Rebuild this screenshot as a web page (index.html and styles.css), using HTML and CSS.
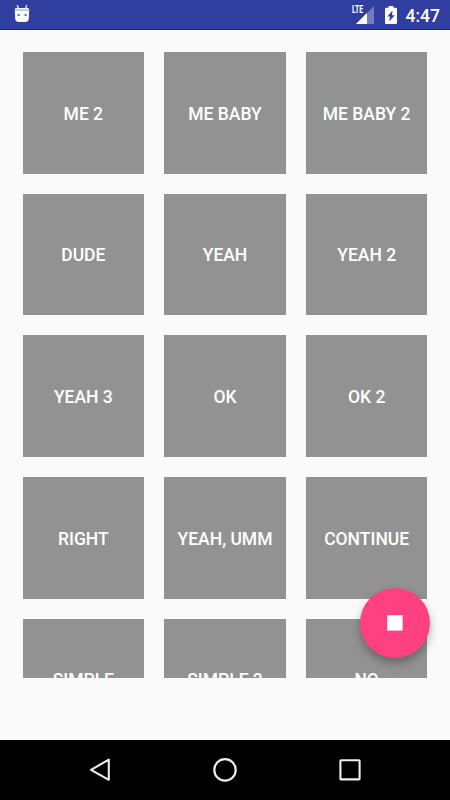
FILE: index.html
```html
<!DOCTYPE html>
<html lang="en">
<head>
    <meta charset="UTF-8">
    <meta name="viewport" content="width=device-width, initial-scale=1.0">
    <title>Soundboard</title>
    <link rel="stylesheet" href="styles.css">
</head>
<body>
    <header class="status-bar">
        <svg class="debug-icon" width="16" height="20" viewBox="0 0 16 20">
            <path d="M3.2 1L4.6 5M12.8 1L11.4 5" stroke="#e8eaf6" stroke-width="1.3" fill="none"/>
            <path d="M.8 5.6Q.8 4 2.4 4H13.6Q15.2 4 15.2 5.6L14.8 14.6Q14.6 18 11.2 18H4.8Q1.4 18 1.2 14.6Z" fill="#fff"/>
            <path d="M1.2 4.9H14.8V7H1.2Z" fill="#c5cae9"/>
            <path d="M3.6 10H5.6V12H3.6ZM10.6 10H12.6V12H10.6Z" fill="#5c68b3"/>
        </svg>
        <div class="status-right">
            <div class="signal">
                <span class="lte">LTE</span>
                <svg width="18" height="18" viewBox="0 0 18 18">
                    <path d="M18 0V18H0Z" fill="#fff" fill-opacity=".32"/>
                    <path d="M11 7V18H0Z" fill="#fff"/>
                </svg>
            </div>
            <svg class="battery" width="12" height="18" viewBox="0 0 12 18">
                <path d="M3.6 0H8.4V1.8H11Q12 1.8 12 2.8V17Q12 18 11 18H1Q0 18 0 17V2.8Q0 1.8 1 1.8H3.6Z" fill="#fff"/>
                <path d="M7.6 4.4L2.2 10.6H5L4.2 15.6L9.8 9.2H7Z" fill="#303f9f"/>
            </svg>
            <span class="clock">4:47</span>
        </div>
    </header>

    <main class="content">
        <div class="sound-grid">
            <button>ME 2</button>
            <button>ME BABY</button>
            <button>ME BABY 2</button>
            <button>DUDE</button>
            <button>YEAH</button>
            <button>YEAH 2</button>
            <button>YEAH 3</button>
            <button>OK</button>
            <button>OK 2</button>
            <button>RIGHT</button>
            <button>YEAH, UMM</button>
            <button>CONTINUE</button>
            <button>SIMPLE</button>
            <button>SIMPLE 2</button>
            <button>NO</button>
        </div>
        <button class="fab" aria-label="Stop">
            <svg width="16" height="16" viewBox="0 0 16 16"><path d="M.2 .2H15.6V15.6H.2Z" fill="#fff"/></svg>
        </button>
    </main>

    <nav class="nav-bar">
        <svg width="24" height="26" viewBox="0 0 24 26">
            <path d="M20.8 2.6V22.8L3 12.8Z" fill="none" stroke="#eee" stroke-width="2.1" stroke-linejoin="round"/>
        </svg>
        <svg width="24" height="26" viewBox="0 0 24 26">
            <circle cx="12" cy="12.9" r="10.7" fill="none" stroke="#eee" stroke-width="2.2"/>
        </svg>
        <svg width="24" height="26" viewBox="0 0 24 26">
            <rect x="2.4" y="3.2" width="19.2" height="19.2" rx=".8" fill="none" stroke="#eee" stroke-width="2.1"/>
        </svg>
    </nav>
</body>
</html>
```

FILE: styles.css
```css
* {
    box-sizing: border-box;
}
body {
    display: flex;
    flex-direction: column;
    height: 100vh;
    margin: 0;
    background: #fafafa;
    color: white;
    font-family: Roboto, sans-serif;
    overflow: hidden;
}
.status-bar {
    display: flex;
    justify-content: space-between;
    height: 30px;
    padding: 0 10px 0 14px;
    background: #303f9f;
    border-bottom: 1px solid #1a237e;
}
.debug-icon {
    margin-top: 4px;
}
.status-right {
    display: flex;
    align-items: flex-start;
}
.signal {
    position: relative;
    width: 22px;
    height: 24px;
    padding: 6px 0 0 4px;
}
.signal svg {
    display: block;
}
.lte {
    position: absolute;
    left: 0;
    top: 5px;
    font-size: 10.5px;
    font-weight: 700;
    line-height: 10px;
    transform: scaleX(0.66);
    transform-origin: left;
}
.battery {
    margin: 6px 0 0 11px;
}
.clock {
    margin-left: 9px;
    font-size: 17.5px;
    font-weight: 500;
    line-height: 32px;
}
.content {
    position: relative;
    flex: 1;
    padding: 22px 22.5px 62.5px;
    min-height: 0;
}
.sound-grid {
    display: grid;
    grid-template-columns: repeat(3, 1fr);
    grid-auto-rows: 121.67px;
    gap: 20px;
    height: 100%;
    overflow: hidden;
}
.sound-grid button {
    padding: 2px 0 0;
    border: none;
    background: #929292;
    color: white;
    font-family: inherit;
    font-size: 17.5px;
    font-weight: 500;
    line-height: 24px;
}
/* floating stop button */
.fab {
    position: absolute;
    right: 20px;
    bottom: 82.5px;
    display: flex;
    align-items: center;
    justify-content: center;
    width: 70px;
    height: 70px;
    padding: 0;
    border: none;
    border-radius: 50%;
    background: #ff4081;
    box-shadow: 0 5px 10px rgba(0, 0, 0, 0.3);
}
.nav-bar {
    display: flex;
    justify-content: center;
    align-items: center;
    gap: 101px;
    height: 60px;
    background: black;
}
```
